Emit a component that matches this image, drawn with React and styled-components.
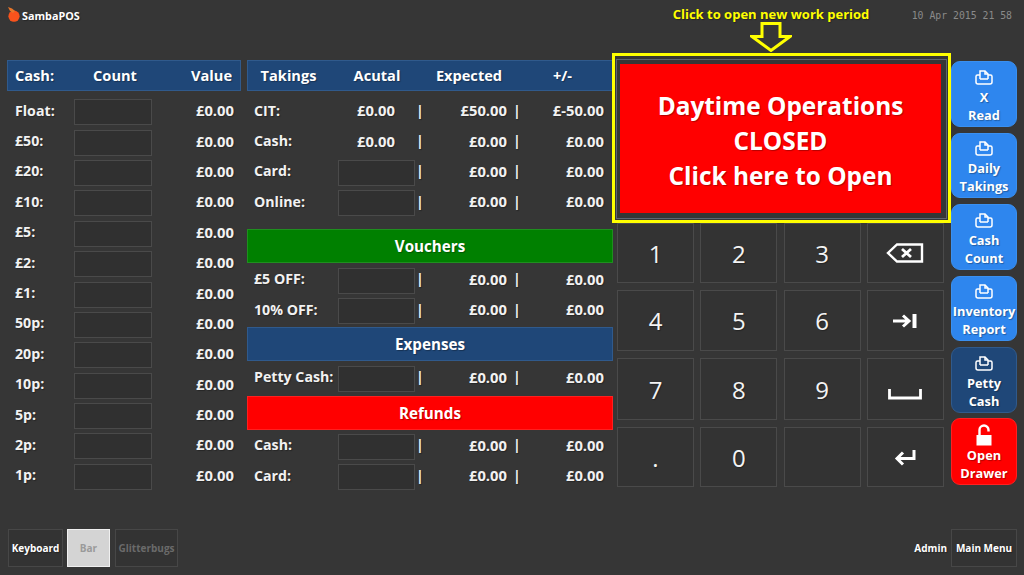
import React from 'react';
import styled, { createGlobalStyle } from 'styled-components';

const GlobalStyle = createGlobalStyle`
  html, body {
    margin: 0;
    padding: 0;
    background: #363636;
  }
  * {
    box-sizing: border-box;
  }
`;

const Screen = styled.div`
  width: 1024px;
  height: 575px;
  overflow: hidden;
  display: flex;
  flex-direction: column;
  background: #363636;
  color: #f2f2f2;
  font-family: 'Open Sans', 'Noto Sans', sans-serif;
  font-weight: 700;
  text-shadow: 1px 1px 1px rgba(0, 0, 0, 0.3);
`;

const TopBar = styled.div`
  height: 53px;
  display: flex;
  flex: none;
`;

const Brand = styled.div`
  flex: none;
  width: 642px;
  display: flex;
  align-items: flex-start;
  gap: 2px;
  padding: 7px 0 0 7px;
  font-size: 10.8px;
  color: #fff;
  line-height: 16px;
`;

const BrandText = styled.span`
  margin-top: 1px;
`;

const Hint = styled.div`
  flex: none;
  width: 258px;
  display: flex;
  flex-direction: column;
  align-items: center;
  color: #ffff00;
  font-size: 13px;
  line-height: 15px;
  padding-top: 7px;
  white-space: nowrap;
`;

const Clock = styled.div`
  flex: 1;
  text-align: right;
  padding: 9px 12px 0 0;
  font-family: 'DejaVu Sans Mono', 'Liberation Mono', monospace;
  font-weight: 400;
  font-size: 9.8px;
  line-height: 14px;
  color: #8a8a8a;
  white-space: nowrap;
  text-shadow: none;
`;

const Main = styled.div`
  flex: 1;
  display: flex;
  padding-left: 7px;
`;

const CashColumn = styled.div`
  width: 234px;
  margin: 7px 6px 0 0;
`;

const TakingsColumn = styled.div`
  width: 366px;
  margin: 7px -1px 0 0;
`;

const Header = styled.div`
  height: 31px;
  display: grid;
  align-items: center;
  background: #1f4778;
  border: 1px solid #305a8c;
  font-size: 14.6px;
  color: #fff;
  margin-bottom: 6px;

  > span {
    margin-bottom: 2px;
  }
`;

const CashHeader = styled(Header)`
  grid-template-columns: 60px 80px 1fr;
  padding: 0 8px 0 7px;
`;

const TakingsHeader = styled(Header)`
  grid-template-columns: 81px 96px 88px 1fr;
  text-align: center;
`;

const RightAligned = styled.span`
  text-align: right;
`;

const Centered = styled.span`
  text-align: center;
`;

const Amount = styled.span`
  text-align: right;
  font-size: 14.8px;
`;

const ActualValue = styled(Amount)`
  padding-right: 20px;
`;

const CashRow = styled.div`
  height: 30.4px;
  display: grid;
  grid-template-columns: 59px 78px 1fr;
  align-items: center;
  padding: 0 7px 0 8px;
  font-size: 14.2px;

  > span {
    margin-bottom: 4px;
  }
`;

const TakingsRow = styled.div`
  height: 30.4px;
  display: grid;
  grid-template-columns: 84px 77px 10px 82px 20px 77px;
  align-items: center;
  padding-left: 7px;
  font-size: 14.2px;
  white-space: nowrap;

  > span {
    margin-bottom: 4px;
  }
`;

const CountBox = styled.div`
  height: 26px;
  background: #303030;
  border: 1px solid #4a4a4a;
`;

const Pipe = styled.span`
  text-align: center;
`;

const SectionBanner = styled.div`
  height: 34px;
  margin: ${props => props.$margin};
  display: flex;
  align-items: center;
  justify-content: center;
  background: ${props => props.$color};
  border: 1px solid ${props => props.$edge};
  font-size: 15.2px;
  color: #fff;
`;

const Panel = styled.div`
  width: 339px;
`;

const Highlight = styled.div`
  height: 170px;
  padding: 3px 1px 1px;
  border: 3px solid #ffff00;
  background: #363636;
`;

const HighlightInner = styled.div`
  height: 100%;
  padding: 4px 5px 5px 3px;
  border: 1px solid #5f6670;
  background: #363636;
`;

const OpenButton = styled.div`
  height: 100%;
  padding-top: 4px;
  display: flex;
  flex-direction: column;
  justify-content: center;
  align-items: center;
  background: #ff0000;
  color: #fff;
  font-size: 24.4px;
  line-height: 35px;
`;

const Keypad = styled.div`
  display: grid;
  grid-template-columns: repeat(4, 77px);
  grid-template-rows: 60px 61px 62px 60px;
  column-gap: 6.3px;
  row-gap: 7px;
  padding: 0 0 0 5px;
`;

const Key = styled.div`
  display: flex;
  align-items: center;
  justify-content: center;
  background: #333333;
  border: 1px solid #4a4a4a;
  color: #f4f4f4;
  font-size: 24px;
  font-weight: 400;
`;

const SideColumn = styled.div`
  width: 66px;
  margin-top: 8px;
  display: flex;
  flex-direction: column;
  gap: 6px;
`;

const SideButton = styled.div`
  height: 65.5px;
  display: flex;
  flex-direction: column;
  align-items: center;
  justify-content: flex-end;
  padding-bottom: 2px;
  border-radius: 9px;
  background: ${props => props.$bg};
  border: 1px solid ${props => props.$edge};
  color: #fff;
  font-size: 12.8px;
  line-height: 18px;
  text-align: center;
`;

const DrawerButton = styled(SideButton)`
  height: 67px;
  margin-top: -1px;
`;

const SideIcon = styled.div`
  height: 15px;
  margin-bottom: 3px;
  line-height: 0;
`;

const Footer = styled.div`
  height: 50px;
  flex: none;
  display: flex;
  align-items: flex-start;
  padding: 4px 7px 0 8px;
  font-size: 10px;
  color: #fff;
`;

const FooterButton = styled.div`
  height: 38px;
  margin-right: ${props => props.$gap}px;
  display: flex;
  align-items: center;
  justify-content: center;
  background: ${props => (props.$active ? '#d4d4d4' : '#333333')};
  border: 1px solid ${props => (props.$active ? '#f0f0f0' : '#474747')};
  color: ${props => props.$color || '#fff'};
  width: ${props => props.$width}px;
  white-space: nowrap;
  text-shadow: ${props => (props.$color ? 'none' : 'inherit')};
`;

const AdminLabel = styled.div`
  margin-left: auto;
  margin-top: 12px;
  margin-right: 4px;
`;

const cashRows = ['Float:', '£50:', '£20:', '£10:', '£5:', '£2:', '£1:', '50p:', '20p:', '10p:', '5p:', '2p:', '1p:'];

const LogoIcon = () => (
  <svg width="13" height="16" viewBox="0 0 13 16">
    <circle cx="7" cy="9.2" r="5.6" fill="#f9531c" />
    <path d="M1 0l4 1.5 3 2.5-2 2-3-2z" fill="#e8762a" />
  </svg>
);

const ArrowIcon = () => (
  <svg width="42" height="30" viewBox="0 0 42 30">
    <path d="M12 1.5h18v13h10L21 28.5 2 14.5h10z" fill="none" stroke="#ffff00" strokeWidth="3" />
  </svg>
);

const PrintIcon = () => (
  <svg width="18" height="15" viewBox="0 0 18 15" fill="none" stroke="#fff" strokeWidth="1.5">
    <path d="M5 9V1h5l3 3v5" />
    <path d="M10 1v3h3" />
    <path d="M5 5H2.5Q1 5 1 6.5V12q0 2 2 2h12q2 0 2-2V6.5Q17 5 15.5 5H13" />
    <path d="M5 9h8" />
  </svg>
);

const LockIcon = () => (
  <svg width="16" height="22" viewBox="0 0 16 22">
    <path d="M3.5 11V6a4.5 4.5 0 0 1 9 0v1.5" fill="none" stroke="#fff" strokeWidth="2.4" />
    <rect x="0.5" y="11" width="15" height="10.5" fill="#fff" />
  </svg>
);

const BackspaceIcon = () => (
  <svg width="38" height="20" viewBox="0 0 38 20" fill="none" stroke="#fff">
    <path d="M36 1.5H11L2 10l9 8.5h25z" strokeWidth="2.4" />
    <path d="M16 6l9 8M25 6l-9 8" strokeWidth="2.8" />
  </svg>
);

const TabIcon = () => (
  <svg width="24" height="14" viewBox="0 0 24 14" fill="none" stroke="#fff" strokeWidth="3">
    <path d="M0 7h16M10 1.5L16 7l-6 5.5" />
    <path d="M21.5 0v14" strokeWidth="4" />
  </svg>
);

const SpaceIcon = () => (
  <svg width="34" height="22" viewBox="0 0 34 22" fill="none" stroke="#fff" strokeWidth="2.8">
    <path d="M1.5 11v9h31v-9" />
  </svg>
);

const EnterIcon = () => (
  <svg width="22" height="20" viewBox="0 0 22 20" fill="none" stroke="#fff" strokeWidth="3">
    <path d="M20 3v8.5H3M9 5.5L3 11.5l6 6" />
  </svg>
);

const sideButtons = [
  { lines: ['X', 'Read'], bg: '#2e86ee', edge: '#3a90f0' },
  { lines: ['Daily', 'Takings'], bg: '#2e86ee', edge: '#3a90f0' },
  { lines: ['Cash', 'Count'], bg: '#2e86ee', edge: '#3a90f0' },
  { lines: ['Inventory', 'Report'], bg: '#2e86ee', edge: '#3a90f0' },
  { lines: ['Petty', 'Cash'], bg: '#1f4778', edge: '#305a8c' },
];

const keys = ['1', '2', '3', <BackspaceIcon />, '4', '5', '6', <TabIcon />, '7', '8', '9', <SpaceIcon />, '.', '0', '', <EnterIcon />];

const Takings = ({ label, actual, expected = '£0.00', diff = '£0.00' }) => (
  <TakingsRow>
    <span>{label}</span>
    {actual ? <ActualValue>{actual}</ActualValue> : <CountBox />}
    <Pipe>|</Pipe>
    <Amount>{expected}</Amount>
    <Pipe>|</Pipe>
    <Amount>{diff}</Amount>
  </TakingsRow>
);

export default function App() {
  return (
    <Screen>
      <GlobalStyle />
      <TopBar>
        <Brand>
          <LogoIcon />
          <BrandText>SambaPOS</BrandText>
        </Brand>
        <Hint>
          Click to open new work period
          <ArrowIcon />
        </Hint>
        <Clock>10 Apr 2015 21 58</Clock>
      </TopBar>
      <Main>
        <CashColumn>
          <CashHeader>
            <span>Cash:</span>
            <Centered>Count</Centered>
            <RightAligned>Value</RightAligned>
          </CashHeader>
          {cashRows.map(label => (
            <CashRow key={label}>
              <span>{label}</span>
              <CountBox />
              <Amount>£0.00</Amount>
            </CashRow>
          ))}
        </CashColumn>
        <TakingsColumn>
          <TakingsHeader>
            <span>Takings</span>
            <span>Acutal</span>
            <span>Expected</span>
            <span>+/-</span>
          </TakingsHeader>
          <Takings label="CIT:" actual="£0.00" expected="£50.00" diff="£-50.00" />
          <Takings label="Cash:" actual="£0.00" />
          <Takings label="Card:" />
          <Takings label="Online:" />
          <SectionBanner $color="#008000" $edge="#1f8f1f" $margin="10px 0 3px">Vouchers</SectionBanner>
          <Takings label="£5 OFF:" />
          <Takings label="10% OFF:" />
          <SectionBanner $color="#1f4778" $edge="#305a8c" $margin="1px 0 2px">Expenses</SectionBanner>
          <Takings label="Petty Cash:" />
          <SectionBanner $color="#ff0000" $edge="#ff2020" $margin="2px 0">Refunds</SectionBanner>
          <Takings label="Cash:" />
          <Takings label="Card:" />
        </TakingsColumn>
        <Panel>
          <Highlight>
            <HighlightInner>
              <OpenButton>
                <span>Daytime Operations</span>
                <span>CLOSED</span>
                <span>Click here to Open</span>
              </OpenButton>
            </HighlightInner>
          </Highlight>
          <Keypad>
            {keys.map((key, i) => (
              <Key key={i}>{key}</Key>
            ))}
          </Keypad>
        </Panel>
        <SideColumn>
          {sideButtons.map(button => (
            <SideButton key={button.lines[0]} $bg={button.bg} $edge={button.edge}>
              <SideIcon><PrintIcon /></SideIcon>
              {button.lines.map(line => <span key={line}>{line}</span>)}
            </SideButton>
          ))}
          <DrawerButton $bg="#ff0000" $edge="#ff2020">
            <LockIcon />
            <span>Open</span>
            <span>Drawer</span>
          </DrawerButton>
        </SideColumn>
      </Main>
      <Footer>
        <FooterButton $width={55} $gap={4}>Keyboard</FooterButton>
        <FooterButton $width={43} $gap={5} $active $color="#9a9a9a">Bar</FooterButton>
        <FooterButton $width={63} $gap={0} $color="#6a6a6a">Glitterbugs</FooterButton>
        <AdminLabel>Admin</AdminLabel>
        <FooterButton $width={66} $gap={0}>Main Menu</FooterButton>
      </Footer>
    </Screen>
  );
}
